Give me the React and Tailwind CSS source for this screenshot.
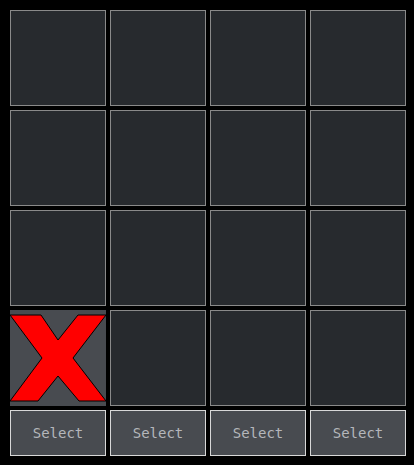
import React from 'react';

const XMark = () => (
  <svg viewBox="0 0 96 96" className="w-full h-full" aria-hidden="true">
    <polygon
      points="0,5 31,5 48,30 68,5 96,5 63,48 96,91 69,91 48,66 28,91 0,91 32,48"
      fill="#ff0000"
      stroke="#000"
      strokeWidth="1"
    />
  </svg>
);

const App = () => {
  // 4x4 board, only bottom-left cell is marked
  const cells = Array.from({ length: 16 }, (_, i) => (i === 12 ? 'x' : null));

  return (
    <div className="min-h-screen w-full bg-black pt-[10px] pl-[10px]">
      <div className="grid grid-cols-[repeat(4,96px)] gap-[4px]">
        {cells.map((c, i) =>
          c === 'x' ? (
            <div key={i} className="h-[96px] w-[96px] bg-[#484b50]">
              <XMark />
            </div>
          ) : (
            <div key={i} className="h-[96px] w-[96px] border border-[#8a8a8a] bg-[#272a2e]" />
          )
        )}
        {[0, 1, 2, 3].map((i) => (
          <button
            key={i}
            className="h-[46px] w-[96px] border border-[#d8d8d8] bg-[#484b50] text-[14px] text-[#b4b7bb] font-['DejaVu_Sans_Mono',monospace]"
          >
            Select
          </button>
        ))}
      </div>
    </div>
  );
};

export default App;
